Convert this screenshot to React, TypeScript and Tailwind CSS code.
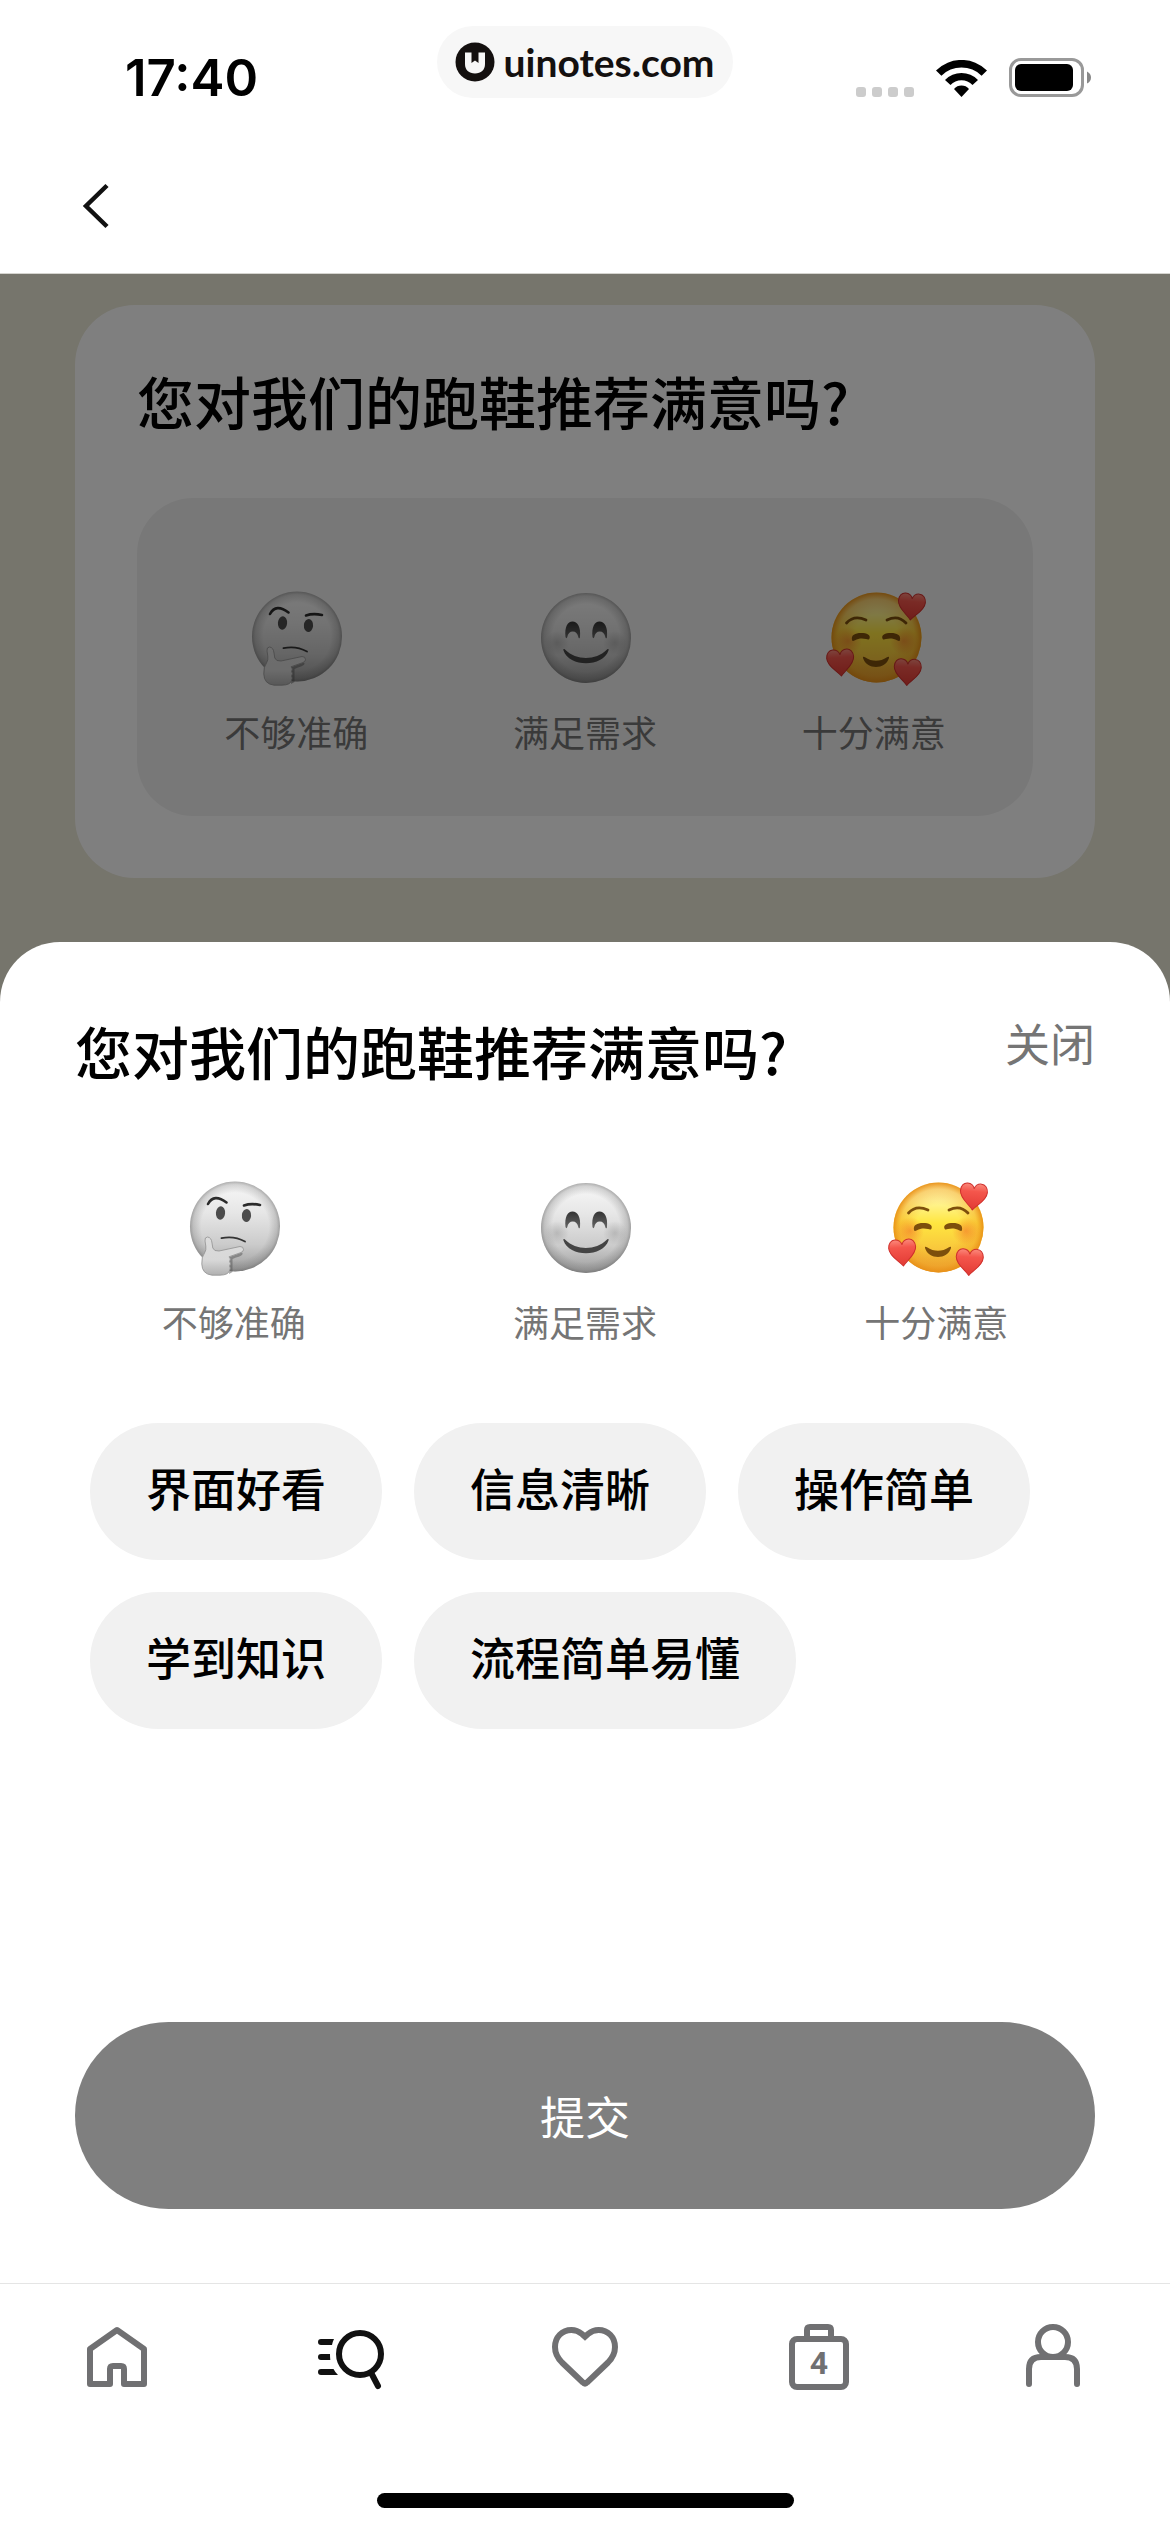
import React, { useState } from 'react';

type FaceName = 'thinking' | 'smile' | 'love';

const RATINGS: { face: FaceName; label: string }[] = [
    { face: 'thinking', label: '不够准确' },
    { face: 'smile', label: '满足需求' },
    { face: 'love', label: '十分满意' },
];

const TAGS = ['界面好看', '信息清晰', '操作简单', '学到知识', '流程简单易懂'];

const QUESTION = '您对我们的跑鞋推荐满意吗?';

// Gradients shared by every face on the page
const FaceDefs = () => (
    <svg className="absolute h-0 w-0" aria-hidden="true">
        <defs>
            <linearGradient id="grey-skin" x1="0" y1="0" x2="0" y2="1">
                <stop offset="0" stopColor="#f8f8f8" />
                <stop offset="0.35" stopColor="#e6e6e6" />
                <stop offset="0.7" stopColor="#cbcbcb" />
                <stop offset="1" stopColor="#9c9c9c" />
            </linearGradient>
            <radialGradient id="grey-rim">
                <stop offset="0.75" stopColor="#555" stopOpacity="0" />
                <stop offset="0.93" stopColor="#555" stopOpacity="0.22" />
                <stop offset="1" stopColor="#555" stopOpacity="0.45" />
            </radialGradient>
            <linearGradient id="hand-skin" x1="0" y1="0" x2="0" y2="1">
                <stop offset="0" stopColor="#dcdcdc" />
                <stop offset="0.6" stopColor="#d8d8d8" />
                <stop offset="1" stopColor="#b0b0b0" />
            </linearGradient>
            <radialGradient id="grey-cheek">
                <stop offset="0" stopColor="#808080" stopOpacity="0.35" />
                <stop offset="1" stopColor="#808080" stopOpacity="0" />
            </radialGradient>
            <linearGradient id="grey-eye" x1="0" y1="0" x2="0" y2="1">
                <stop offset="0" stopColor="#333" />
                <stop offset="1" stopColor="#666" />
            </linearGradient>
            <linearGradient id="gold-skin" x1="0" y1="0" x2="0" y2="1">
                <stop offset="0" stopColor="#fff7b8" />
                <stop offset="0.2" stopColor="#fff59a" />
                <stop offset="0.45" stopColor="#ffe640" />
                <stop offset="0.75" stopColor="#f8c63c" />
                <stop offset="1" stopColor="#e9a032" />
            </linearGradient>
            <radialGradient id="gold-rim">
                <stop offset="0.5" stopColor="#f09a20" stopOpacity="0" />
                <stop offset="0.85" stopColor="#f09a20" stopOpacity="0.4" />
                <stop offset="1" stopColor="#e88f16" stopOpacity="0.95" />
            </radialGradient>
            <radialGradient id="gold-cheek">
                <stop offset="0" stopColor="#f3762a" stopOpacity="0.6" />
                <stop offset="1" stopColor="#f3762a" stopOpacity="0" />
            </radialGradient>
            <linearGradient id="heart-red" x1="0" y1="0" x2="0" y2="1">
                <stop offset="0" stopColor="#fb8a7c" />
                <stop offset="0.3" stopColor="#f4564c" />
                <stop offset="1" stopColor="#e23a34" />
            </linearGradient>
        </defs>
    </svg>
);

const SmallHeart = ({ transform }: { transform: string }) => (
    <path
        transform={transform}
        d="M0 13.5C-4 8-13.5 3-13.5-5C-13.5-10-10.5-13-7-13C-3.5-13-1-11 0-8C1-11 3.5-13 7-13C10.5-13 13.5-10 13.5-5C13.5 3 4 8 0 13.5Z"
        fill="url(#heart-red)"
        stroke="#cf302c"
        strokeWidth="1"
        strokeLinejoin="round"
    />
);

const Face = ({ name }: { name: FaceName }) => {
    if (name === 'thinking') {
        return (
            <svg viewBox="0 0 100 100" className="h-[100px] w-[100px] overflow-visible" aria-hidden="true">
                <circle cx="51" cy="49.5" r="45" fill="url(#grey-skin)" />
                <circle cx="51" cy="49.5" r="45" fill="url(#grey-rim)" />
                <path d="M24 27Q30 16 42.5 25.5" fill="none" stroke="#2b2b2b" strokeWidth="2.6" strokeLinecap="round" />
                <path d="M60 28.500Q67 26 76 28" fill="none" stroke="#2b2b2b" strokeWidth="2.6" strokeLinecap="round" />
                <ellipse cx="36.5" cy="36" rx="4.6" ry="6.8" fill="#4c4c4c" transform="rotate(5 36.5 36)" />
                <ellipse cx="62.5" cy="38.5" rx="4.6" ry="6.6" fill="#4c4c4c" transform="rotate(5 62.5 38.5)" />
                <path d="M37.500 61.2Q50 58.5 61 64.5" fill="none" stroke="#333" strokeWidth="1.8" strokeLinecap="round" />
                <path d="M46 80L58 75.5Q60.5 78 52 80.5L48.5 82V95L45 97Z" fill="#555" opacity="0.5" />
                <path
                    d="M21 64Q20.5 60 23.5 60Q27.500 60.5 28 66L28.8 71Q30 74.5 35 74L56 69.5Q59.5 69.5 59.5 72.5Q59.5 74.5 57 75.5L45 79.8Q47.5 82 45.5 84.5Q47.5 86.5 45.5 89Q47 91 45.5 93.5Q44.5 98 36 98.2H28Q18 97 17.8 87Q17.5 79.5 20.5 76Q22.500 73 21.8 69Z"
                    fill="url(#hand-skin)"
                    stroke="#909090"
                    strokeWidth="0.8"
                />
            </svg>
        );
    }

    if (name === 'smile') {
        return (
            <svg viewBox="0 0 100 100" className="h-[100px] w-[100px] overflow-visible" aria-hidden="true">
                <circle cx="51" cy="51" r="45" fill="url(#grey-skin)" />
                <circle cx="51" cy="51" r="45" fill="url(#grey-rim)" />
                <circle cx="22" cy="56" r="12" fill="url(#grey-cheek)" />
                <circle cx="80" cy="56" r="12" fill="url(#grey-cheek)" />
                <path d="M30.5 50C29.5 40 32.5 34.5 37.5 34.5C42.5 34.5 46 40 45 50C45 52 43.5 51.5 43.3 50C42.8 46.5 40.5 44.5 37.8 44.5C35 44.5 32.8 46.5 32.3 50C32 51.5 30.8 51.5 30.5 50Z" fill="url(#grey-eye)" />
                <path d="M57.5 50C56.5 40 59.5 34.5 64.5 34.5C69.5 34.5 73 40 72 50C72 52 70.5 51.5 70.3 50C69.8 46.5 67.5 44.5 64.8 44.5C62 44.5 59.8 46.5 59.3 50C59 51.5 57.8 51.5 57.5 50Z" fill="url(#grey-eye)" />
                <path d="M28.5 63.5C28 61.5 29.5 61.8 30.5 63C41 73.5 61 73.5 71.5 63C72.5 61.8 74 61.5 73.5 63.5C68 80.5 34 80.5 28.5 63.5Z" fill="#444" />
            </svg>
        );
    }

    return (
        <svg viewBox="0 0 100 100" className="h-[100px] w-[100px] overflow-visible" aria-hidden="true">
            <circle cx="52.5" cy="50.5" r="45" fill="url(#gold-skin)" />
            <circle cx="52.5" cy="50.5" r="45" fill="url(#gold-rim)" />
            <circle cx="24" cy="54" r="14" fill="url(#gold-cheek)" />
            <circle cx="80" cy="54" r="14" fill="url(#gold-cheek)" />
            <path d="M22.5 36Q30 27.5 42 33" fill="none" stroke="#7d4f0c" strokeWidth="2.8" strokeLinecap="round" />
            <path d="M63 33Q74 27.5 82 36" fill="none" stroke="#7d4f0c" strokeWidth="2.8" strokeLinecap="round" />
            <path d="M28 53C27 48 31 46 37 46C43 46 47 48 45.5 51.5C45 53 43.5 52.3 42 52C38 51 34 51.5 31 53.2C29.5 54 28.3 54.5 28 53Z" fill="#7d4f0c" />
            <path d="M76 53C77 48 73 46 67 46C61 46 57 48 58.5 51.5C59 53 60.5 52.3 62 52C66 51 70 51.5 73 53.2C74.5 54 75.7 54.5 76 53Z" fill="#7d4f0c" />
            <path d="M39 71C38.7 69.5 40 69.5 41 70.3C48 75 56 75 63 70.3C64 69.5 65.3 69.5 65 71C61.5 83 42.5 83 39 71Z" fill="#7d4f0c" />
            <SmallHeart transform="translate(87.5 19.5) rotate(5)" />
            <SmallHeart transform="translate(16.5 75.5) rotate(-4)" />
            <SmallHeart transform="translate(83.5 85) rotate(3)" />
        </svg>
    );
};

interface RatingRowProps {
    selected: FaceName;
    onSelect: (face: FaceName) => void;
}

const RatingRow: React.FC<RatingRowProps> = ({ selected, onSelect }) => (
    <div className="grid grid-cols-3">
        {RATINGS.map(({ face, label }) => (
            <button
                key={face}
                type="button"
                aria-pressed={selected === face}
                onClick={() => onSelect(face)}
                className="flex flex-col items-center gap-[22px]"
            >
                <Face name={face} />
                <span className="text-[36px] leading-[44px] text-[#757575]">{label}</span>
            </button>
        ))}
    </div>
);

const StatusBar = () => (
    <div className="grid grid-cols-[1fr_auto_1fr] items-start pt-[26px]">
        <div className="pt-5 pl-[125px] font-['Inter',sans-serif] text-[51px] leading-[64px] font-semibold">17:40</div>
        <div className="flex h-[72px] items-center gap-2 rounded-full bg-[#f7f7f7] px-[18px]">
            <svg viewBox="0 0 40 40" className="h-10 w-10" aria-hidden="true">
                <circle cx="20" cy="20" r="19.5" fill="#14100f" />
                <path d="M10 10.5H16.5V21L20 18.5L23.5 21V10.5H30V22C30 28 26 31.5 20 31.5C14 31.5 10 28 10 22Z" fill="#f7f7f7" />
            </svg>
            <span className="font-['Lato',sans-serif] text-[39px] leading-[44px] font-bold text-[#14100f]">uinotes.com</span>
        </div>
        <div className="flex items-end justify-end gap-[22px] pt-8 pr-[79px]">
            <div className="flex gap-[6px]">
                {[0, 1, 2, 3].map((dot) => (
                    <span key={dot} className="h-[10px] w-[10px] rounded-[3px] bg-[#ccc]" />
                ))}
            </div>
            <svg viewBox="0 0 51 37" className="h-[37px] w-[51px]" aria-hidden="true">
                <path d="M0 10.5A36 36 0 0 1 51 10.5L45.6 15.7A28.5 28.5 0 0 0 5.4 15.7Z" />
                <path d="M9 20A23 23 0 0 1 42 20L36.5 25A15 15 0 0 0 14.5 25Z" />
                <path d="M18 29A10 10 0 0 1 33 29L25.5 37Z" />
            </svg>
            <svg viewBox="0 0 82 39" className="h-[39px] w-[82px]" aria-hidden="true">
                <rect x="1.5" y="1.5" width="72" height="36" rx="10.5" fill="none" stroke="#999" strokeWidth="3" />
                <rect x="6" y="6" width="58" height="27" rx="6" />
                <path d="M78 13.5Q82 15.5 82 19.5Q82 23.5 78 25.5Z" fill="#888" />
            </svg>
        </div>
    </div>
);

const TabBar = () => (
    <nav className="border-t border-[#e5e5e5] bg-white pt-[37px] pb-6">
        <div className="grid grid-cols-5 justify-items-center text-[#707072]">
            <a href="#home" aria-label="首页">
                <svg viewBox="0 0 72 72" className="h-[72px] w-[72px]" fill="none" stroke="currentColor" strokeWidth="6" strokeLinejoin="round">
                    <path d="M36 9L9 28V63H29V48Q29 45 32 45H40Q43 45 43 48V63H63V28Z" />
                </svg>
            </a>
            <a href="#shop" aria-label="选购" className="text-[#111]">
                <svg viewBox="0 0 72 72" className="h-[72px] w-[72px]" fill="currentColor">
                    <circle cx="45" cy="33" r="21" fill="none" stroke="currentColor" strokeWidth="6" />
                    <path d="M57 53.5L63 65" fill="none" stroke="currentColor" strokeWidth="6" strokeLinecap="round" />
                    <path d="M6 18H19Q17.5 21 17 24H6A3 3 0 0 1 6 18Z" />
                    <path d="M6 33H15Q15 36 15.3 39H6A3 3 0 0 1 6 33Z" />
                    <path d="M6 48H18.5Q20 51 23 54H6A3 3 0 0 1 6 48Z" />
                </svg>
            </a>
            <a href="#favorites" aria-label="心愿单">
                <svg viewBox="0 0 72 72" className="h-[72px] w-[72px]" fill="none" stroke="currentColor" strokeWidth="6">
                    <path d="M34 61.5Q36 64 38 61.5L59 41.5C63.5 37 66 33 66 26C66 16 59 9 49.5 9C45.5 9 42 10.5 39 13L36 15.7L33 13C30 10.5 26.5 9 22.5 9C13 9 6 16 6 26C6 33 8.5 37 13 41.5Z" />
                </svg>
            </a>
            <a href="#bag" aria-label="购物袋">
                <svg viewBox="0 0 72 72" className="h-[72px] w-[72px]" fill="none" stroke="currentColor" strokeWidth="6">
                    <rect x="9" y="18" width="54" height="48" rx="5" />
                    <path d="M24 18V9Q24 6 27 6H45Q48 6 48 9V18" />
                    <text x="36" y="53" textAnchor="middle" fill="currentColor" stroke="none" className="font-['Roboto',sans-serif] text-[32px] font-bold">4</text>
                </svg>
            </a>
            <a href="#profile" aria-label="我的">
                <svg viewBox="0 0 72 72" className="h-[72px] w-[72px]" fill="none" stroke="currentColor" strokeWidth="6" strokeLinecap="round">
                    <circle cx="36" cy="21" r="15" />
                    <path d="M12 63V48Q12 36 24 36H48Q60 36 60 48V63" />
                </svg>
            </a>
        </div>
        <div className="mx-auto mt-[100px] h-[15px] w-[417px] rounded-full bg-black" />
    </nav>
);

const App: React.FC = () => {
    const [rating, setRating] = useState<FaceName>('love');
    const [tags, setTags] = useState<string[]>([]);

    const toggleTag = (tag: string) => {
        setTags((prev) => (prev.includes(tag) ? prev.filter((t) => t !== tag) : [...prev, tag]));
    };

    return (
        <div className="flex min-h-screen flex-col bg-white font-['Noto_Sans_CJK_SC',sans-serif] text-black">
            <FaceDefs />
            <header className="border-b border-[#d5d4cf]">
                <StatusBar />
                <button type="button" aria-label="返回" className="mt-[72px] mb-[43px] ml-[72px] block">
                    <svg viewBox="0 0 48 48" className="h-12 w-12" fill="none" stroke="#111" strokeWidth="4.5">
                        <path d="M35 3.5L14 24L35 44.5" />
                    </svg>
                </button>
            </header>

            <main className="flex flex-1 flex-col">
                <div className="relative bg-[#ecead9] px-[75px] pt-[31px] pb-16">
                    <section className="rounded-[60px] bg-white px-[62px] pt-[61px] pb-[62px]">
                        <h2 className="text-[57px] leading-[68px] font-medium">{QUESTION}</h2>
                        <div className="mt-16 rounded-[56px] bg-[#f1f1f1] px-[15px] pt-[89px] pb-[63px]">
                            <RatingRow selected={rating} onSelect={setRating} />
                        </div>
                    </section>
                    <div className="absolute inset-0 bg-black/50" />
                </div>

                {/* dimmed page colour shows behind the sheet's rounded corners */}
                <div className="flex flex-1 flex-col bg-[#76756c]">
                    <section role="dialog" aria-labelledby="sheet-title" className="flex flex-1 flex-col rounded-t-[60px] bg-white pt-[74px] pb-[74px]">
                        <div className="flex items-start justify-between px-[75px]">
                            <h1 id="sheet-title" className="text-[57px] leading-[68px] font-medium">{QUESTION}</h1>
                            <button type="button" className="text-[45px] leading-[54px] text-[#757575]">关闭</button>
                        </div>
                        <div className="mt-[93px] px-[58px]">
                            <RatingRow selected={rating} onSelect={setRating} />
                        </div>
                        <div className="mt-20 flex flex-wrap gap-8 px-[90px]">
                            {TAGS.map((tag) => (
                                <button
                                    key={tag}
                                    type="button"
                                    aria-pressed={tags.includes(tag)}
                                    onClick={() => toggleTag(tag)}
                                    className="h-[137px] rounded-full bg-[#f1f1f1] px-14 pb-2 text-[45px] leading-[54px] font-medium"
                                >
                                    {tag}
                                </button>
                            ))}
                        </div>
                        <div className="mt-auto px-[75px] pt-16">
                            <button type="button" className="h-[187px] w-full rounded-full bg-[#7f7f7f] text-[45px] leading-[54px] text-white">提交</button>
                        </div>
                    </section>
                </div>
            </main>

            <TabBar />
        </div>
    );
};

export default App;
